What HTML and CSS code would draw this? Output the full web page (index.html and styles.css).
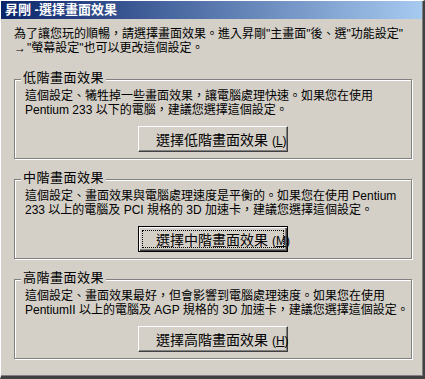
FILE: index.html
```html
<!DOCTYPE html>
<html lang="zh-Hant">
<head>
    <meta charset="UTF-8">
    <title>昇剛 -選擇畫面效果</title>
    <link rel="stylesheet" href="styles.css">
</head>
<body>

    <div class="window">
        <div class="titlebar">昇剛 -選擇畫面效果</div>

        <p class="intro">為了讓您玩的順暢，請選擇畫面效果。進入昇剛"主畫面"後、選"功能設定"<br><span class="arrow">→</span>"螢幕設定"也可以更改這個設定。</p>

        <!-- 低階 -->
        <div class="group">
            <span class="group-label">低階畫面效果</span>
            <p class="desc">這個設定、犧牲掉一些畫面效果，讓電腦處理快速。如果您在使用<br>Pentium 233 以下的電腦，建議您選擇這個設定。</p>
            <div class="actions">
                <button class="btn">選擇低階畫面效果 <span class="key">(<u>L</u>)</span></button>
            </div>
        </div>

        <!-- 中階 -->
        <div class="group">
            <span class="group-label">中階畫面效果</span>
            <p class="desc">這個設定、畫面效果與電腦處理速度是平衡的。如果您在使用 Pentium<br>233 以上的電腦及 PCI 規格的 3D 加速卡，建議您選擇這個設定。</p>
            <div class="actions">
                <button class="btn btn-default">選擇中階畫面效果 <span class="key">(<u>M</u>)</span></button>
            </div>
        </div>

        <!-- 高階 -->
        <div class="group">
            <span class="group-label">高階畫面效果</span>
            <p class="desc">這個設定、畫面效果最好，但會影響到電腦處理速度。如果您在使用<br>PentiumII 以上的電腦及 AGP 規格的 3D 加速卡，建議您選擇這個設定。</p>
            <div class="actions">
                <button class="btn">選擇高階畫面效果 <span class="key">(<u>H</u>)</span></button>
            </div>
        </div>
    </div>

</body>
</html>
```

FILE: styles.css
```css
html, body {
    margin: 0;
}

body {
    width: 425px;
    height: 379px;
    overflow: hidden;
    background-color: #D4D0C8;
    color: #000;
    font-family: "Liberation Sans", "Noto Sans CJK TC", sans-serif;
    font-size: 12px;
}

.window {
    box-sizing: border-box;
    height: 379px;
    border-top: 1px solid #fff;
    border-left: 1px solid #fff;
    border-right: 2px solid #404040;
    border-bottom: 3px solid #404040;
    box-shadow: inset -1px -1px 0 #808080;
}

.titlebar {
    height: 18px;
    margin-right: 1px;
    padding-left: 4px;
    line-height: 18px;
    font-size: 13px;
    font-weight: bold;
    color: #fff;
    background: linear-gradient(to right, #0A246A, #A6CAF0);
    white-space: pre;
}

.intro {
    margin: 8px 0 0 13px;
    line-height: 14px;
    white-space: nowrap;
}

.arrow {
    display: inline-block;
    width: 12px;
    margin-right: 1px;
    text-align: center;
}

.group {
    position: relative;
    box-sizing: border-box;
    height: 80px;
    margin: 20px 11px 0 13px;
    padding: 9px 10px 0;
    border: 1px solid #808080;
    box-shadow: 1px 1px 0 #fff, inset 1px 1px 0 #fff;
}

.intro + .group {
    margin-top: 24px;
}

.group-label {
    position: absolute;
    top: -9px;
    left: 6px;
    padding: 0 2px;
    background-color: #D4D0C8;
    font-size: 13px;
    line-height: 14px;
    letter-spacing: 0.5px;
}

.desc {
    margin: 0;
    line-height: 14px;
    white-space: nowrap;
}

.actions {
    display: flex;
    justify-content: center;
    margin-top: 9px;
}

.btn {
    position: relative;
    box-sizing: border-box;
    width: 150px;
    height: 26px;
    padding: 0 0 0 17px;
    text-align: left;
    background-color: #D4D0C8;
    color: #000;
    font-family: "Liberation Sans", "Noto Sans CJK TC", sans-serif;
    font-size: 14px;
    border: 1px solid;
    border-color: #fff #404040 #404040 #fff;
    box-shadow: inset -1px -1px 0 #808080;
    white-space: nowrap;
}

.btn .key {
    font-size: 12px;
}

.btn-default {
    border-color: #000;
    box-shadow: inset 1px 1px 0 #fff, inset -1px -1px 0 #404040, inset -2px -2px 0 #808080;
}

.btn-default::after {
    content: "";
    position: absolute;
    top: 3px;
    left: 3px;
    right: 3px;
    bottom: 3px;
    border: 1px dotted #000;
}
```
